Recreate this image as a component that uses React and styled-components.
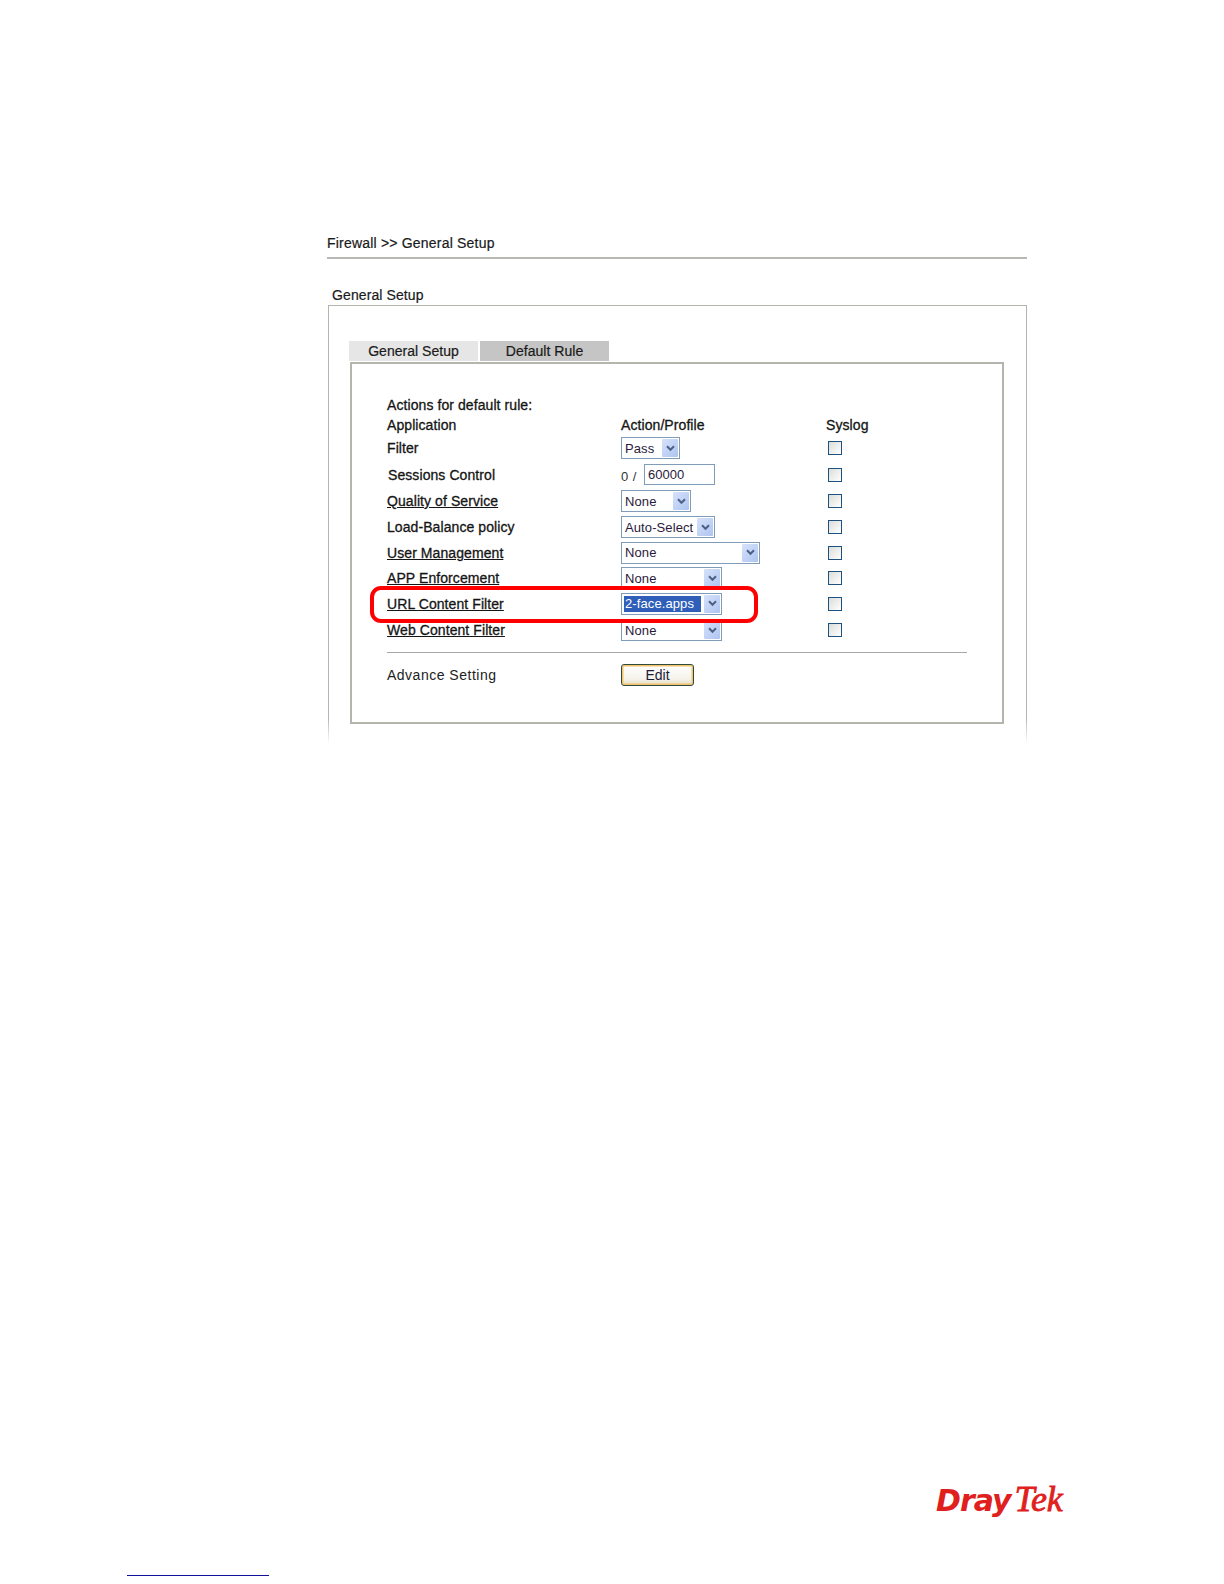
import React from "react";
import styled, { createGlobalStyle } from "styled-components";

const Global = createGlobalStyle`
  html, body { margin: 0; padding: 0; background: #fff; }
  body { width: 1224px; height: 1584px; overflow: hidden; font-family: "Liberation Sans", Arial, sans-serif; color: #111; }
`;
const Page = styled.div`
  position: relative; width: 1224px; height: 1584px; box-sizing: border-box; padding: 234px 197px 0 327px;
`;
const Breadcrumb = styled.div`
  font-size: 14px; line-height: 18px; letter-spacing: 0.2px; height: 23px; border-bottom: 2px solid #b8b8b4; color: #1a1a1a;
  -webkit-text-stroke: 0.2px #1a1a1a;
`;
const LegendTitle = styled.div`
  margin: 27px 0 0 5px; font-size: 14px; line-height: 18px; height: 19px; letter-spacing: 0.1px; color: #1a1a1a;
  -webkit-text-stroke: 0.2px #1a1a1a;
`;
const Outer = styled.div`
  margin-left: 1px; height: 438px; box-sizing: border-box; padding: 35px 22px 0 20px;
  border-style: solid; border-width: 1.5px 1.5px 0 1.5px;
  border-image: linear-gradient(#b4b4ae 94%, #fff 100%) 1;
`;
const Tabs = styled.div`display: flex; gap: 2px; height: 21px;`;
const Tab = styled.div`
  width: 129px; height: 20px; display: flex; align-items: center; justify-content: center;
  background: ${p => p.$active ? "#c5c5c5" : "#e6e6e6"}; font-size: 14px; letter-spacing: 0.03px; color: #1a1a1a;
  -webkit-text-stroke: 0.2px #1a1a1a;
`;
const Inner = styled.div`
  margin: 0 0 0 1px; width: 654px; height: 362px; box-sizing: border-box; padding: 31px 36px 0 35px;
  border: 2px solid #b5b5ad;
`;
const Row = styled.div`
  display: grid; grid-template-columns: 234px 205px 1fr; align-items: center; height: ${p => p.$h}px;
`;
const Label = styled.span`
  font-size: 14px; letter-spacing: 0.08px; color: #151515; font-weight: 400; -webkit-text-stroke: 0.3px #151515;
  text-decoration: ${p => p.$link ? "underline" : "none"}; margin-left: ${p => p.$indent || 0}px; white-space: nowrap;
`;
const Select = styled.div`
  width: ${p => p.$w}px; height: 22px; box-sizing: border-box; border: 1px solid #7f9db9; display: flex; align-items: center;
  justify-content: space-between; padding: 0 1px 0 2px; background: #fff;
`;
const SelectText = styled.span`
  font-size: 13px; line-height: 16px; letter-spacing: 0.1px; margin-top: 1px; padding: 0 ${p => p.$sel ? "7px" : "3px"} 0 1px; white-space: nowrap; color: ${p => p.$sel ? "#fff" : "#2a1a3a"};
  background: ${p => p.$sel ? "#2f5fb8" : "transparent"};
`;
const Arrow = styled.span`
  width: 16px; height: 18px; display: flex; align-items: center; justify-content: center; border-radius: 1px;
  background: linear-gradient(135deg, #d6e2fb, #aec4f0);
`;
const SessionCell = styled.div`display: flex; align-items: center; gap: 6px;`;
const Zero = styled.span`font-size: 13px; letter-spacing: 0.4px; color: #333; padding-top: 4px; width: 17px; white-space: nowrap;`;
const Input = styled.div`
  width: 71px; height: 21px; box-sizing: border-box; border: 1px solid #7f9db9; font-size: 13px; line-height: 20px; padding-left: 3px; color: #2a1a3a;
`;
const Check = styled.span`
  margin-left: 2px; width: 12px; height: 12px; display: block; border: 1px solid #1c5180;
  background: linear-gradient(135deg, #dcdcd7, #ffffff);
`;
const Rule = styled.div`height: 1px; background: #a8a8a4; margin: 9px 0 10px; width: 580px;`;
const Edit = styled.div`
  width: 73px; height: 22px; box-sizing: border-box; border: 1px solid #2f4a44; border-radius: 3px; display: flex; align-items: center; justify-content: center;
  font-size: 14px; color: #1a1a3a; background: linear-gradient(#fff 0%, #f4f2ea 70%, #e4dcc4 100%);
  box-shadow: inset 0 0 0 1.5px #f2c468;
`;
const Adv = styled.span`
  font-size: 14px; letter-spacing: 0.5px; color: #222; white-space: nowrap;
`;
const Highlight = styled.div`
  position: absolute; left: 370px; top: 586px; width: 388px; height: 37px; box-sizing: border-box;
  border: 4px solid #f00; border-radius: 11px;
`;
const Logo = styled.div`
  position: absolute; left: 936px; top: 1478px; display: flex; align-items: baseline; color: #e0201c; white-space: nowrap;
`;
const LogoDray = styled.span`
  font: italic 700 30px "DejaVu Sans", Verdana, sans-serif; letter-spacing: -1px;
`;
const LogoTek = styled.span`
  font: italic 400 36px "Liberation Serif", "Times New Roman", serif; margin-left: 4px; letter-spacing: -0.3px; -webkit-text-stroke: 0.8px #e0201c;
`;
const FooterLine = styled.div`
  position: absolute; left: 127px; top: 1575px; width: 142px; height: 1px; background: #10109a;
`;

const Chevron = () => (
  <svg width="9" height="7" viewBox="0 0 9 7" aria-hidden="true">
    <path d="M1 1.2 L4.5 4.8 L8 1.2" fill="none" stroke="#4d6185" strokeWidth="2" />
  </svg>
);

const Sel = ({ w, text, selected }) => (
  <Select $w={w}>
    <SelectText $sel={selected}>{text}</SelectText>
    <Arrow><Chevron /></Arrow>
  </Select>
);

const rows = [
  { h: 26, label: "Filter", w: 59, text: "Pass" },
  { h: 27, label: "Sessions Control", indent: 1, session: true },
  { h: 26, label: "Quality of Service", link: true, w: 70, text: "None" },
  { h: 26, label: "Load-Balance policy", w: 94, text: "Auto-Select" },
  { h: 25.5, label: "User Management", link: true, w: 139, text: "None" },
  { h: 25, label: "APP Enforcement", link: true, w: 101, text: "None" },
  { h: 26.5, label: "URL Content Filter", link: true, w: 101, text: "2-face.apps", selected: true },
  { h: 26, label: "Web Content Filter", link: true, w: 101, text: "None" },
];

export default function App() {
  return (
    <Page>
      <Global />
      <Breadcrumb>Firewall &gt;&gt; General Setup</Breadcrumb>
      <LegendTitle>General Setup</LegendTitle>
      <Outer>
        <Tabs>
          <Tab>General Setup</Tab>
          <Tab $active>Default Rule</Tab>
        </Tabs>
        <Inner>
          <Row $h={20}><Label>Actions for default rule:</Label></Row>
          <Row $h={20}>
            <Label>Application</Label>
            <Label>Action/Profile</Label>
            <Label>Syslog</Label>
          </Row>
          {rows.map(r => (
            <Row key={r.label} $h={r.h}>
              <Label $link={r.link} $indent={r.indent}>{r.label}</Label>
              {r.session ? (
                <SessionCell><Zero>0 /</Zero><Input>60000</Input></SessionCell>
              ) : (
                <Sel w={r.w} text={r.text} selected={r.selected} />
              )}
              <Check />
            </Row>
          ))}
          <Rule />
          <Row $h={24}>
            <Adv>Advance Setting</Adv>
            <Edit>Edit</Edit>
          </Row>
        </Inner>
      </Outer>
      <Highlight />
      <Logo><LogoDray>Dray</LogoDray><LogoTek>Tek</LogoTek></Logo>
      <FooterLine />
    </Page>
  );
}
